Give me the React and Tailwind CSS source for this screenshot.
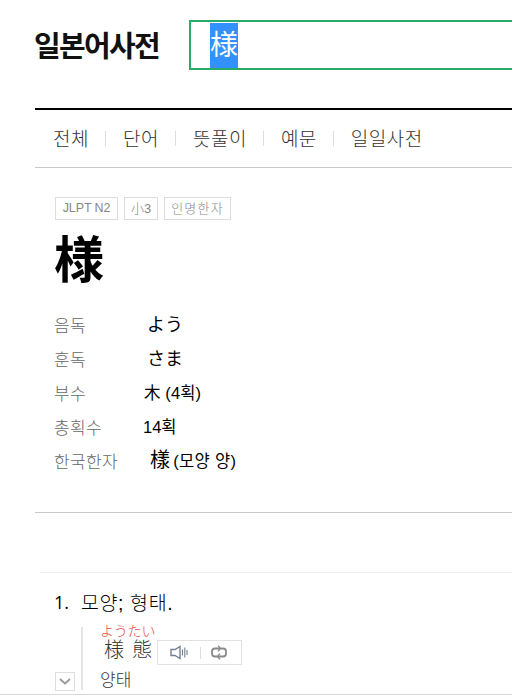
const tabs = ['전체', '단어', '뜻풀이', '예문', '일일사전']

const tags = [
  { label: 'JLPT N2', style: 'w-[63px] text-[12.5px] tracking-[-0.1px]' },
  { label: '小3', style: 'w-[34px] text-[13px]' },
  { label: '인명한자', style: 'w-[67px] text-[13px] tracking-[1.2px]' },
]

const readings = [
  { label: '음독', value: 'よう', style: 'pl-1 text-[18px]' },
  { label: '훈독', value: 'さま', style: 'pl-1 text-[18px]' },
  { label: '부수', value: '木 (4획)', style: 'pl-px text-[16.5px] tracking-[0.1px]' },
  { label: '총획수', value: '14획', style: 'text-[16.5px]' },
  { label: '한국한자', hanja: '樣', value: '(모양 양)', style: 'pl-[7px] text-[16.5px] tracking-[0.3px]' },
]

function Header() {
  return (
    <header className="flex h-[108px] shrink-0 pt-5">
      <h1 className="-ml-px w-[155px] pt-[7px] text-[29px] leading-[40px] font-bold tracking-[-1.7px] text-[#111] whitespace-nowrap">
        일본어사전
      </h1>
      <div className="h-[50px] flex-1 border-2 border-r-0 border-[#27ab66] pt-px pl-[19px]">
        <span className="block h-[45px] w-7 bg-[#3390ff] font-['Noto_Sans_CJK_JP',sans-serif] text-[28px] leading-[40px] text-white">
          様
        </span>
      </div>
    </header>
  )
}

function Tabs() {
  return (
    <nav className="flex h-[60px] items-center border-t-2 border-b border-t-black border-b-[#c8c8c8] pl-[18px] text-[19px] font-light tracking-[0.5px] text-[#333]">
      {tabs.map((tab, i) => (
        <div key={tab} className="flex items-center whitespace-nowrap">
          {i > 0 && <span className="mr-[17px] ml-4 h-[15px] w-px bg-[#ddd]" />}
          <span className="pt-1">{tab}</span>
        </div>
      ))}
    </nav>
  )
}

function KanjiInfo() {
  return (
    <section className="h-[345px] border-b border-[#c8c8c8] pt-[29px] pl-5">
      <div className="flex gap-1.5">
        {tags.map((tag) => (
          <span
            key={tag.label}
            className={`flex h-[23px] items-center justify-center border border-[#ddd] font-light whitespace-nowrap text-[#888] ${tag.style}`}
          >
            {tag.label}
          </span>
        ))}
      </div>
      <h2 className="-ml-px h-[88px] font-['Noto_Sans_CJK_JP',sans-serif] text-[50px] leading-[72px] font-bold text-black">様</h2>
      <dl>
        {readings.map((row) => (
          <div key={row.label} className="flex h-[33.8px] items-center leading-[34px] whitespace-nowrap">
            <dt className="-ml-px w-[89px] pt-[5px] text-[17px] font-light tracking-[0.4px] text-[#666]">{row.label}</dt>
            <dd className={`pt-px text-black ${row.style}`}>
              {row.hanja && <span className="mr-[3px] text-[20px] leading-none">{row.hanja}</span>}
              {row.value}
            </dd>
          </div>
        ))}
      </dl>
    </section>
  )
}

function ExampleTools() {
  return (
    <div className="flex h-[25px] w-[85px] items-center border border-[#e2e2e2]">
      <svg className="ml-3 h-[15px] w-[18px]" viewBox="0 0 18 15" fill="none" stroke="#71808e" strokeWidth="1.4">
        <path d="M1 4.5h4L10 1.5v12L5 10.5H1z" />
        <path d="M12.5 4.5v6M14.8 2.5v10M17 5v5" strokeWidth="1.1" />
      </svg>
      <span className="ml-3 h-3 w-px bg-[#ddd]" />
      <svg className="ml-[9px] h-[15px] w-[18px]" viewBox="0 0 18 15" fill="none" stroke="#8a8a8a" strokeWidth="1.8">
        <path d="M7 11.5H5Q2 11.5 2 8.5V6.5Q2 3.5 5 3.5H10M11 3.5H13Q16 3.5 16 6.5V8.5Q16 11.5 13 11.5H8" />
        <path d="M8 .8 10.7 3.5 8 6.2M10 8.8 7.3 11.5 10 14.2" strokeWidth="1.4" />
      </svg>
    </div>
  )
}

function Meaning() {
  return (
    <section className="ml-[5px] mt-[59px] border-t border-[#eee]">
      <p className="flex h-[54px] pt-[10px] pl-3.5 leading-[40px] whitespace-nowrap text-black">
        <span className="w-[27px] font-['Open_Sans','Noto_Sans_CJK_KR',sans-serif] text-[18px] leading-[39px]">1.</span>
        <span className="text-[19.5px] font-light tracking-[0.6px]">모양; 형태.</span>
      </p>
      <div className="-ml-10 flex h-[68px] border-b border-[#d8d8d8] pl-[55px]">
        <div className="flex w-[26px] items-end pb-[3px]">
          <span className="flex h-[19px] w-5 items-center justify-center border border-[#ddd]">
            <svg className="h-[7px] w-3" viewBox="0 0 12 7" fill="none" stroke="#999" strokeWidth="1.8">
              <path d="m1 1 5 4.5L11 1" />
            </svg>
          </span>
        </div>
        <div className="h-[63px] w-0.5 bg-[#e5e5e5]" />
        <div className="pl-[17px]">
          <div className="flex h-[38px] items-end">
            <div className="w-[57px] whitespace-nowrap font-['Liberation_Sans','Noto_Sans_CJK_JP',sans-serif]">
              <div className="h-[13px] text-[14px] leading-[9px] font-light tracking-[-0.2px] text-[#e24848]">ようたい</div>
              <div className="h-[25px] pl-1 text-[20px] leading-[21px] font-light text-[#333]">
                様<span className="ml-2">態</span>
              </div>
            </div>
            <ExampleTools />
          </div>
          <p className="text-[17px] leading-[31px] font-light tracking-[0.2px] text-[#333]">양태</p>
        </div>
      </div>
    </section>
  )
}

export default function App() {
  return (
    <div className="h-[697px] overflow-hidden bg-white pl-[35px] font-['Liberation_Sans','Noto_Sans_CJK_KR',sans-serif]">
      <Header />
      <Tabs />
      <KanjiInfo />
      <Meaning />
    </div>
  )
}
